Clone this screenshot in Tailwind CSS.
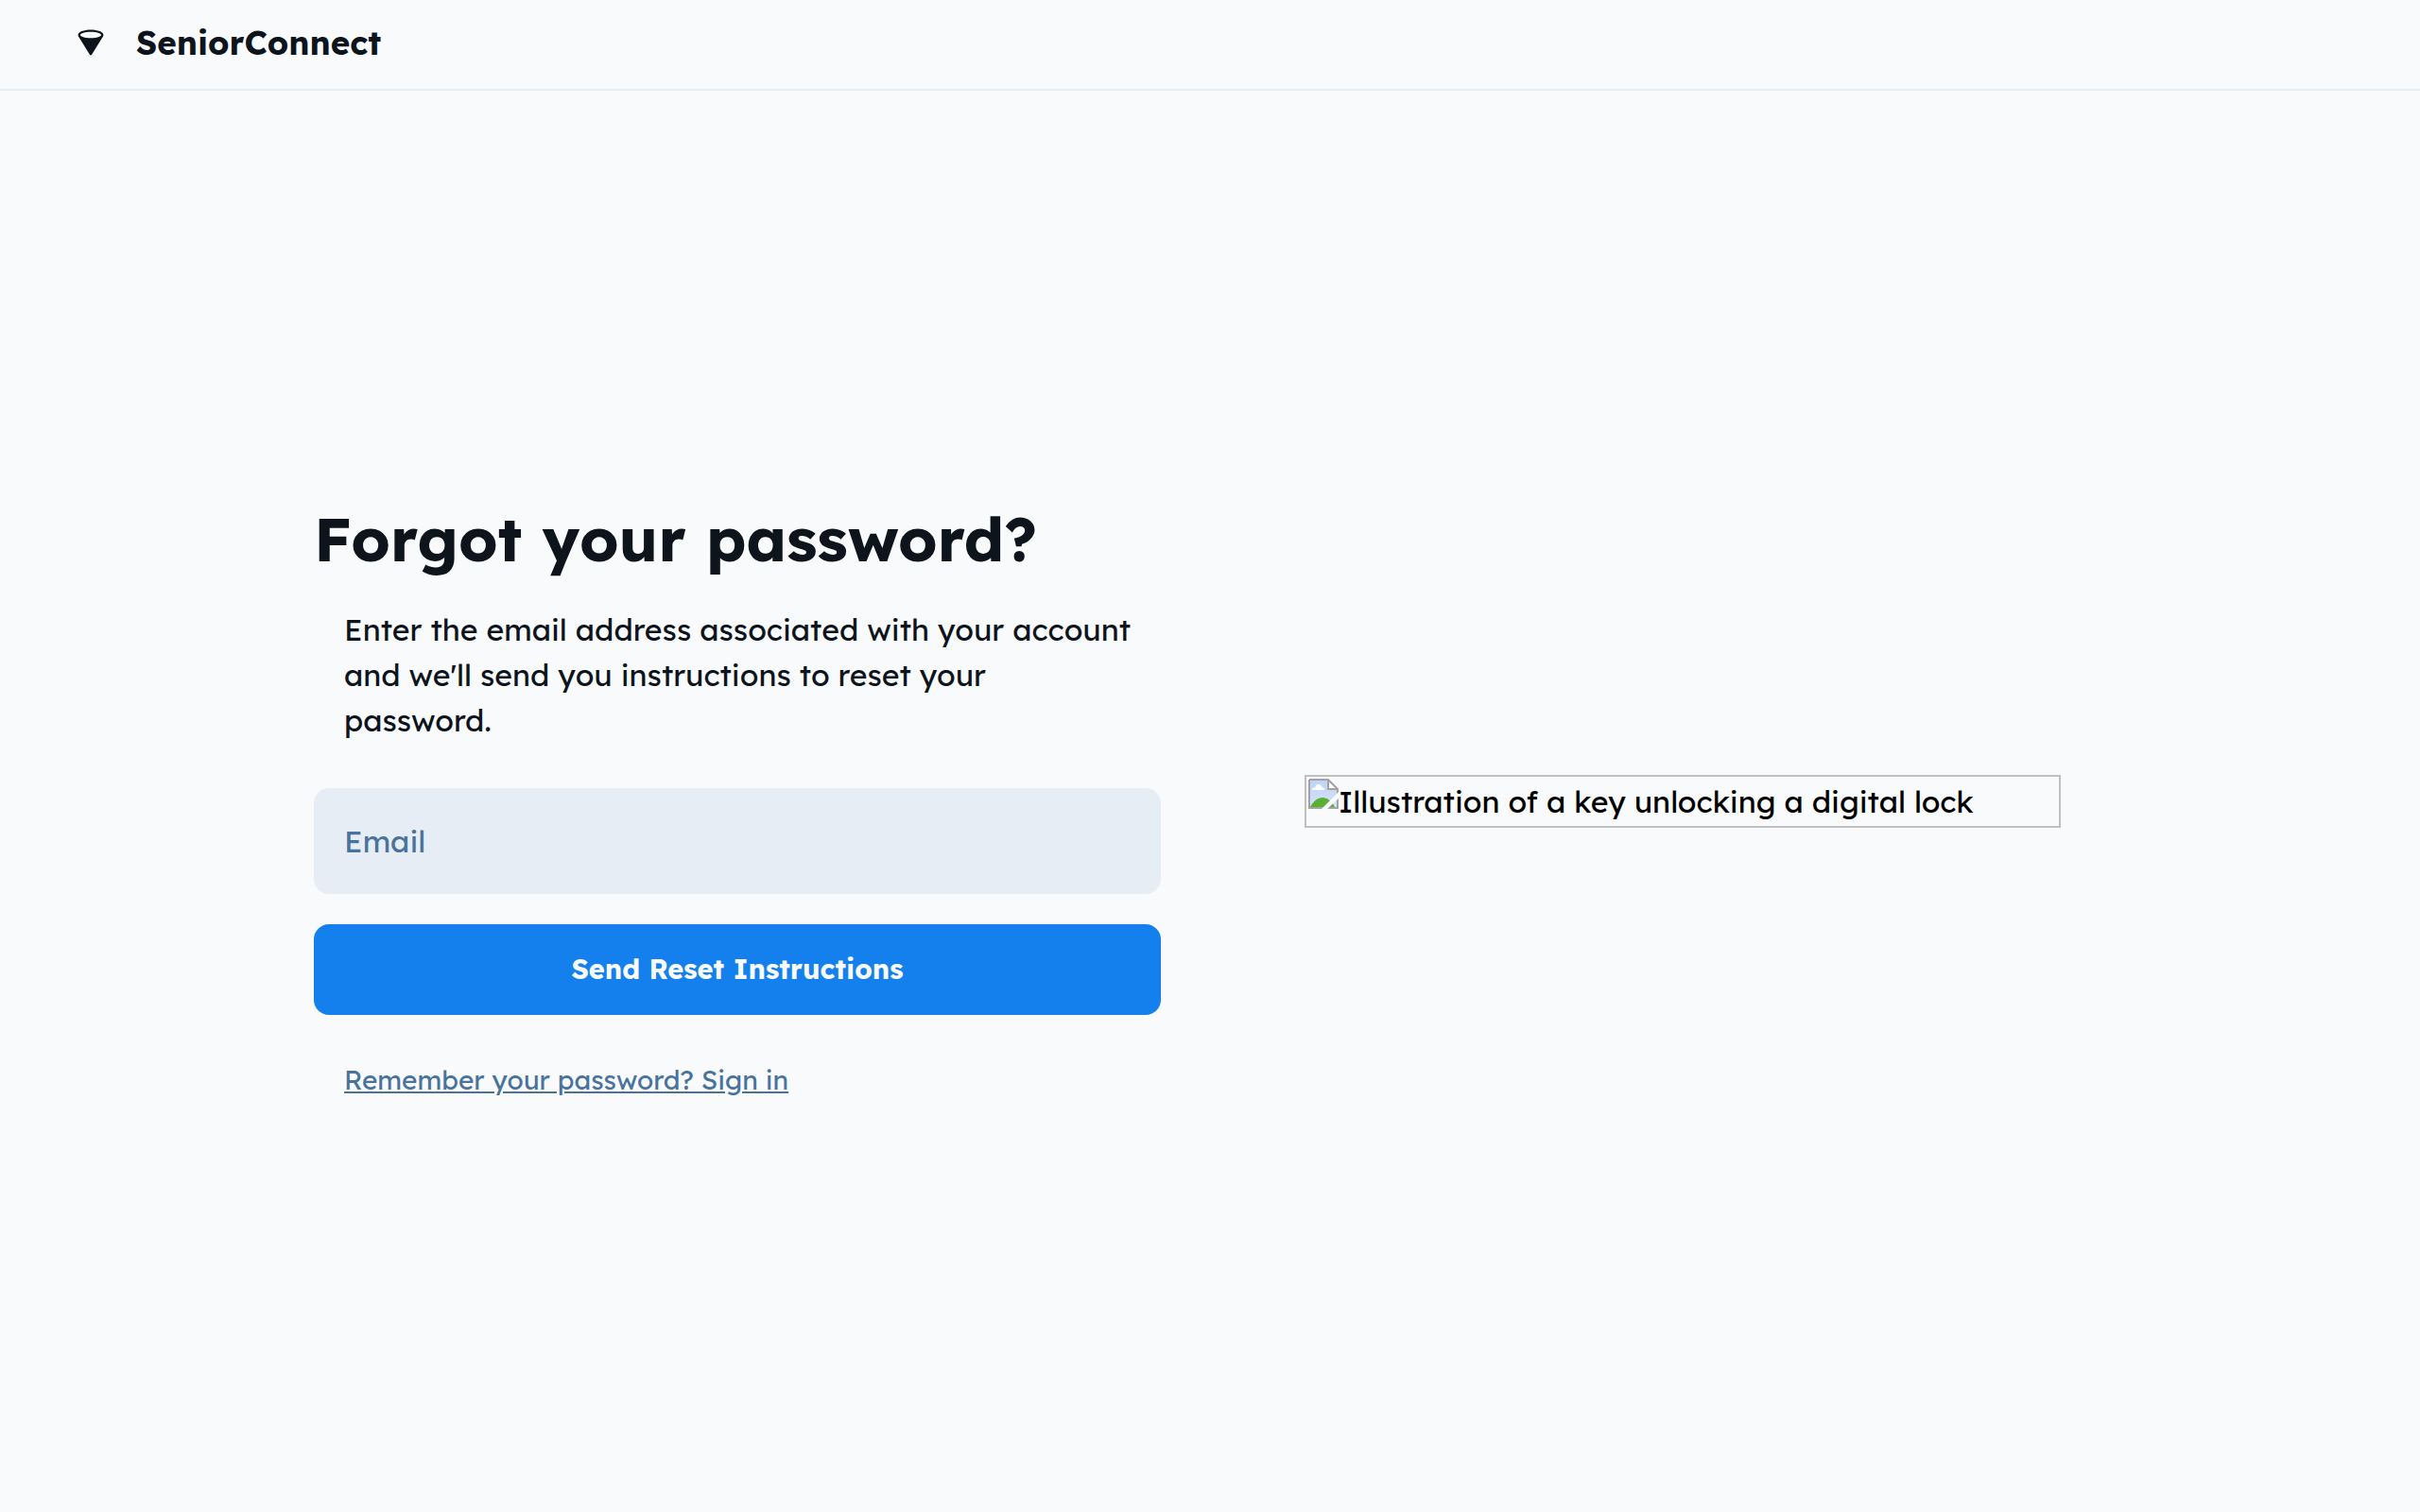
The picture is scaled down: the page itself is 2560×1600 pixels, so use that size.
<!DOCTYPE html>
<html lang="en">
<head>
<meta charset="utf-8">
<meta name="viewport" content="width=device-width, initial-scale=1">
<title>SeniorConnect</title>
<script src="https://cdn.jsdelivr.net/npm/@tailwindcss/browser@4"></script>
</head>
<body class="flex min-h-screen flex-col bg-[#f8fafc] font-[Lexend,Inter,sans-serif] text-[#0d141c]">
<header class="flex items-center gap-8 border-b-2 border-[#e7edf4] px-20 pt-6 pb-7">
  <svg class="size-8" viewBox="0 2 32 32" aria-hidden="true">
    <path fill="currentColor" fill-rule="evenodd" d="M16 4.600C8.600 4.600 2.600 6.900 2.600 10c0 1.100.5 1.800 1 2.600l11.300 18.100c.5.800 1.700.8 2.200 0l11.300-18.100c.6-.9 1-1.500 1-2.600 0-3.100-6-5.400-13.400-5.400Zm0 2.200c6.200 0 11 1.500 11 3.200S22.200 13.200 16 13.200 5 11.700 5 10s4.800-3.200 11-3.200Z"/>
  </svg>
  <h2 class="text-[35px] leading-[42px] font-bold">SeniorConnect</h2>
</header>
<main class="flex grow items-center justify-center">
  <div class="grid w-full max-w-[1920px] grid-cols-2 items-center gap-20">
    <form class="mx-auto w-full max-w-[896px]">
      <h1 class="pt-10 pb-6 text-[65px] leading-[80px] font-bold">Forgot your password?</h1>
      <p class="pt-2 pr-6 pb-12 pl-8 text-[32px] leading-[48px] font-[380]">Enter the email address associated with your account and we'll send you instructions to reset your password.</p>
      <input type="email" aria-label="Email" placeholder="Email" class="block h-28 w-full rounded-2xl bg-[#e7edf4] px-8 text-[32px] font-[380] placeholder:text-[#49739c]">
      <button type="button" class="mt-8 block h-24 w-full rounded-2xl bg-[#1480ed] text-[29px] font-bold text-[#f8fafc]">Send Reset Instructions</button>
      <p class="px-8 pt-12 pb-[42px] text-[28px] leading-[42px]"><a href="#" class="text-[#49739c] underline">Remember your password? Sign in</a></p>
    </form>
    <div role="img" aria-label="Illustration of a key unlocking a digital lock" class="mx-auto flex h-14 w-full max-w-[800px] items-start border-2 border-[#c0c0c0] p-[2px] text-black">
      <svg class="size-8 shrink-0" viewBox="0 0 32 32" aria-hidden="true">
        <defs>
          <linearGradient id="sky" x1="0" y1="0" x2="0" y2="1">
            <stop offset="0" stop-color="#bfd3f5"/>
            <stop offset="1" stop-color="#d6e2f8"/>
          </linearGradient>
        </defs>
        <path fill="url(#sky)" d="M1 1h20l10 10v20H1z"/>
        <path fill="#fff" d="M4 12c0-2 1.500-3 3.500-3C8 6.500 9.500 6 11 6s3 1 3.500 3c1.500 0 2.500 1 2.500 3z"/>
        <path fill="#5aaf35" d="M2 30c3-6 8-10 13-10s10 4 13 10z"/>
        <path fill="#f8fafc" d="M21 1l10 10h1V0H21z"/>
        <path fill="#fff" d="M21 1v10h10z"/>
        <path fill="none" stroke="#a3a3a3" stroke-width="2" d="M1 1v30h30V11L21 1H1M21 1v10h10"/>
        <path fill="#f8fafc" d="M32 14v7L20 32h-6z"/>
      </svg>
      <span class="text-[32px] leading-[48px] font-[380]">Illustration of a key unlocking a digital lock</span>
    </div>
  </div>
</main>
</body>
</html>
